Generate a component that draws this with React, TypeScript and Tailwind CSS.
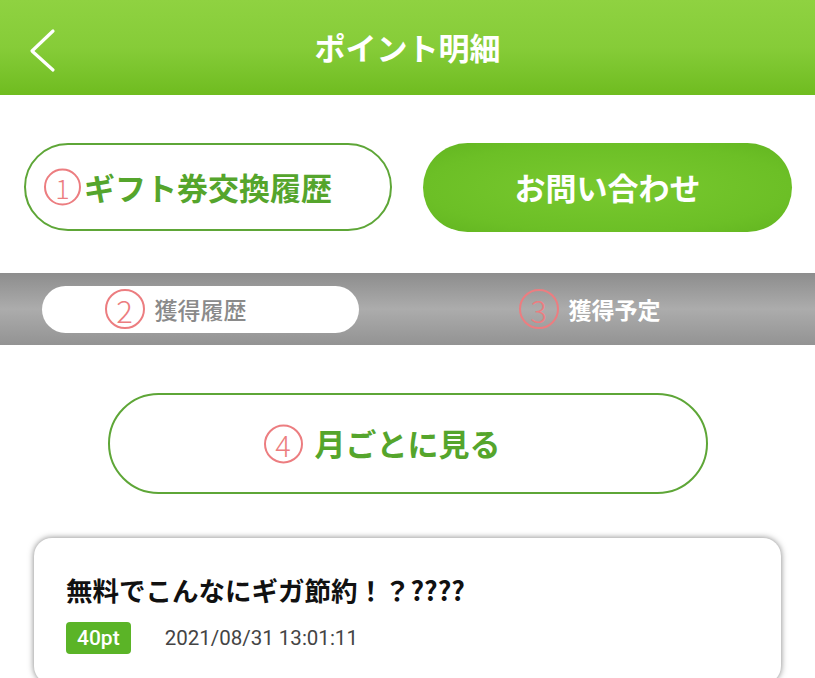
import React from "react";

const font = { fontFamily: '"Noto Sans CJK JP", "Noto Sans", sans-serif' };

const Mark = ({ n, gap, size }: { n: string; gap: string; size: string }) => (
  <span
    className={`absolute right-full top-1/2 -translate-y-1/2 ${gap} ${size} flex items-center justify-center rounded-full border-2 border-[#ec7d80] text-[#ec7d80] font-light leading-none`}
  >
    {n}
  </span>
);

const App = () => {
  return (
    <div className="w-[815px] h-[678px] overflow-hidden bg-white" style={font}>
      {/* header */}
      <header className="relative h-[95px] flex items-center justify-center bg-gradient-to-b from-[#8fd241] via-[#86cc38] to-[#6fbc1f]">
        <button className="absolute left-[28px] top-[28px]">
          <svg width="30" height="46" viewBox="0 0 30 46" fill="none">
            <polyline
              points="25,3 4,23 25,42"
              stroke="#fff"
              strokeWidth="3.2"
              strokeLinecap="round"
              strokeLinejoin="round"
            />
          </svg>
        </button>
        <h1 className="text-[31px] font-bold text-white">ポイント明細</h1>
      </header>

      {/* top buttons */}
      <div className="flex justify-between px-[24px] mt-[48px] pr-[23px]">
        <button className="w-[368px] h-[88px] rounded-full border-2 border-[#5ea637] flex items-center justify-center">
          <span className="relative text-[31px] font-bold text-[#55a52c]">
            <Mark n="1" gap="mr-[3px]" size="w-[37px] h-[37px] text-[27px]" />
            ギフト券交換履歴
          </span>
        </button>
        <button className="w-[369px] h-[89px] rounded-full bg-[radial-gradient(ellipse_at_center,#79c92f_0%,#6cbf26_70%,#62b520_100%)] flex items-center justify-center">
          <span className="text-[31px] font-bold text-white">お問い合わせ</span>
        </button>
      </div>

      {/* tabs */}
      <div className="mt-[41px] h-[72px] flex items-center justify-between px-[42px] bg-gradient-to-b from-[#8d8d8d] via-[#acacac] to-[#939393]">
        <div className="w-[317px] h-[47px] rounded-full bg-white flex items-center justify-center">
          <span className="relative text-[23px] text-[#8a8a8a] font-medium">
            <Mark n="2" gap="mr-[10px]" size="w-[40px] h-[40px] text-[31px]" />
            獲得履歴
          </span>
        </div>
        <div className="w-[317px] h-[47px] flex items-center justify-center">
          <span className="relative text-[23px] text-white font-bold">
            <Mark n="3" gap="mr-[10px]" size="w-[40px] h-[40px] text-[31px]" />
            獲得予定
          </span>
        </div>
      </div>

      {/* monthly */}
      <div className="flex justify-center mt-[48px]">
        <button className="w-[600px] h-[101px] rounded-full border-2 border-[#5ea637] flex items-center justify-center">
          <span className="relative text-[31px] font-bold text-[#55a52c]">
            <Mark n="4" gap="mr-[12px]" size="w-[39px] h-[39px] text-[29px]" />
            月ごとに見る
          </span>
        </button>
      </div>

      {/* history card */}
      <div className="mt-[44px] mx-[34px] rounded-[18px] bg-white shadow-[0_0_6px_rgba(0,0,0,0.5)] px-[32px] pt-[34px] pb-[30px]">
        <p className="text-[26.5px] font-bold text-[#111] leading-[36px]">無料でこんなにギガ節約！？????</p>
        <div className="flex items-center mt-[14px]">
          <span
            className="h-[32px] px-[11px] rounded-[4px] bg-[#5bb427] text-white text-[21px] font-medium leading-[32px]"
            style={{ fontFamily: "Roboto, sans-serif" }}
          >
            40pt
          </span>
          <span className="ml-[34px] text-[20.5px] text-[#444]" style={{ fontFamily: "Roboto, sans-serif" }}>
            2021/08/31 13:01:11
          </span>
        </div>
      </div>
    </div>
  );
};

export default App;
